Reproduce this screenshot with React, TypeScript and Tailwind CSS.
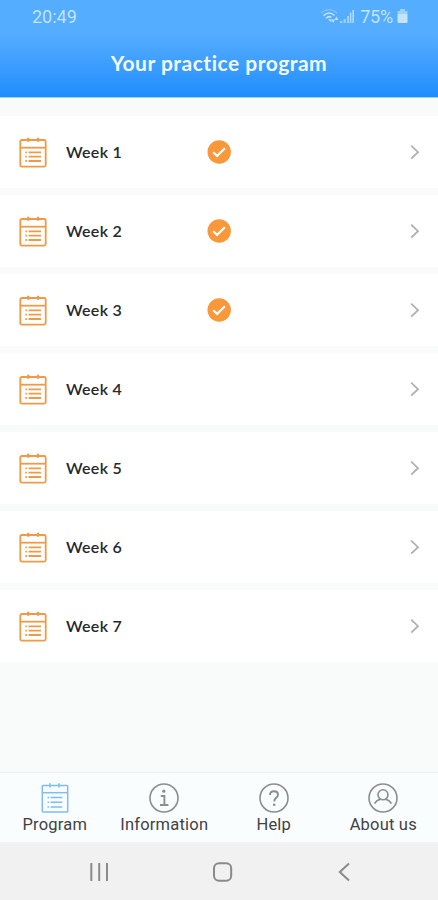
import clsx from "clsx";

const weeks = [
  { name: "Week 1", done: true },
  { name: "Week 2", done: true },
  { name: "Week 3", done: true },
  { name: "Week 4", done: false },
  { name: "Week 5", done: false },
  { name: "Week 6", done: false },
  { name: "Week 7", done: false },
];

function CalendarIcon({ className }: { className?: string }) {
  return (
    <svg
      width="28"
      height="32"
      viewBox="0 0 28 32"
      fill="none"
      stroke="currentColor"
      strokeWidth="1.8"
      className={className}
    >
      <rect x="1.3" y="4" width="25.4" height="26.6" rx="1.5" />
      <path d="M1.3 11.7h25.4" />
      <path d="M9.2 1.8v4M19 1.8v4" strokeWidth="2.2" />
      <path d="M9.5 16.4h12.5M9.5 20.7h12.5M9.5 25h12.5" />
      <path d="M6.3 16.4h1.6M6.3 20.7h1.6M6.3 25h1.6" />
    </svg>
  );
}

// thinner version used in the tab bar
function ProgramIcon() {
  return (
    <svg width="28" height="32" viewBox="0 0 28 32" fill="none" stroke="currentColor" strokeWidth="1.5">
      <rect x="1.3" y="3.5" width="25.4" height="26.5" rx="0.8" />
      <path d="M1.3 10.7h25.4" />
      <path d="M9 1.2v4.4M18 1.2v4.4" />
      <path d="M9.5 15.4h11.8M9.5 20.2h11.8M9.5 25h11.8" />
      <path d="M6.5 15.4h1.5M6.5 20.2h1.5M6.5 25h1.5" />
    </svg>
  );
}

function CheckIcon() {
  return (
    <svg width="24" height="24" viewBox="0 0 24 24" fill="none">
      <circle cx="12.2" cy="12" r="11.7" fill="#f8983a" />
      <path d="M6.2 12.3l3.9 3.6 7.8-7.6" stroke="#fff" strokeWidth="2.2" />
    </svg>
  );
}

function StatusBar() {
  return (
    <div className="flex h-8 items-center pr-[30px] pl-8 font-['Roboto',sans-serif] text-[18px] text-[#c3e3fd]">
      <span>20:49</span>
      <div className="ml-auto flex items-center">
        <svg width="19" height="16" viewBox="0 0 19 16" fill="none" stroke="currentColor">
          <path d="M1 5.2C5.5 0.6 12.5 0.6 17 5.2" strokeWidth="1.1" opacity="0.5" />
          <path d="M3.6 7.6C7 4.4 11 4.4 14.4 7.4" strokeWidth="1.6" />
          <path d="M6.2 10.2c1.6-1.7 3.6-1.9 5.2-.7" strokeWidth="1.5" />
          <path d="M8 11.2l3.4 3.2v-3.2z" fill="currentColor" stroke="none" />
          <path d="M11.5 11.5h3.4l-1.7 3.4zM14.4 12l2-3.6 2 3.6z" fill="currentColor" stroke="none" />
        </svg>
        <svg width="15" height="15" viewBox="0 0 15 15" fill="currentColor" className="ml-px">
          <path d="M0 12h2.4v2H0zM3.6 10h2.2v4H3.6zM7 7h2v7H7z" opacity="0.65" />
          <path d="M9.8 3.5h1.6V14H9.8zM12.4 1H14v13h-1.6z" opacity="0.85" />
        </svg>
        <span className="mr-px ml-[5px] tracking-[-0.2px]">75%</span>
        <svg width="11" height="15" viewBox="0 0 11 15" fill="currentColor" className="ml-[3px]">
          <path d="M3 0h5v2H3zM.5 2h10v2.5H.5z" opacity="0.65" />
          <path d="M.5 4.5h10V13a1 1 0 0 1-1 1h-8a1 1 0 0 1-1-1z" />
        </svg>
      </div>
    </div>
  );
}

function InfoIcon() {
  return (
    <svg width="30" height="32" viewBox="0 0 30 32" fill="none" stroke="currentColor" strokeWidth="1.6">
      <circle cx="15" cy="16" r="14" />
      <circle cx="14.8" cy="9.2" r="1.6" fill="currentColor" stroke="none" />
      <path d="M11.8 14h3.6v8.8M11 23h8.4" strokeWidth="1.9" />
    </svg>
  );
}

function HelpIcon() {
  return (
    <svg width="30" height="32" viewBox="0 0 30 32" fill="none" stroke="currentColor" strokeWidth="1.6">
      <circle cx="15" cy="16" r="14" />
      <path d="M11 13c0-2.6 1.7-3.8 4-3.8s4 1.2 4 3.5c0 3-3.8 3.2-3.8 6.8" strokeWidth="1.9" />
      <circle cx="15.2" cy="22.8" r="1.3" fill="currentColor" stroke="none" />
    </svg>
  );
}

function UserIcon() {
  return (
    <svg width="30" height="32" viewBox="0 0 30 32" fill="none" stroke="currentColor" strokeWidth="1.6">
      <circle cx="15" cy="16" r="14" />
      <circle cx="15" cy="12.8" r="5" />
      <path d="M6.6 21.6c1.1-2.3 3.2-3.7 5.8-4.4M17.6 17.2c2.6.7 4.7 2.1 5.8 4.4" />
    </svg>
  );
}

const tabs = [
  { label: "Program", icon: <ProgramIcon />, active: true },
  { label: "Information", icon: <InfoIcon />, active: false },
  { label: "Help", icon: <HelpIcon />, active: false },
  { label: "About us", icon: <UserIcon />, active: false },
];

export default function App() {
  return (
    <div className="flex h-[900px] w-[438px] flex-col overflow-hidden bg-[#f8fbfa]">
      <header className="h-[98px] border-b border-[#a5d2fb] bg-linear-to-b from-[#54adff] from-35% to-[#1c8dfd]">
        <StatusBar />
        <h1 className="mt-[17px] text-center font-['Lato',sans-serif] text-[21px] leading-[28px] font-bold tracking-[0.5px] text-[#f2faff]">
          Your practice program
        </h1>
      </header>

      <main className="flex flex-1 flex-col gap-[7px] pt-[18px]">
        {weeks.map((week) => (
          <div
            key={week.name}
            className="flex h-[72px] items-center bg-white pr-[17px] pl-[19px]"
          >
            <CalendarIcon className="text-[#f09a48]" />
            <span className="ml-[19px] w-[141px] pb-px font-['Lato',sans-serif] text-[16px] font-semibold tracking-[0.3px] text-[#25282c]">
              {week.name}
            </span>
            {week.done && <CheckIcon />}
            <svg
              width="11"
              height="16"
              viewBox="0 0 11 16"
              fill="none"
              stroke="#b0b0b0"
              strokeWidth="1.8"
              className="ml-auto"
            >
              <path d="M1.2 1.7L8 8.2l-6.8 6.5" />
            </svg>
          </div>
        ))}
      </main>

      <nav className="grid h-[70px] grid-cols-4 border-t border-[#edf0f0] bg-[#fafdfd] pt-[9px]">
        {tabs.map((tab) => (
          <div key={tab.label} className="flex flex-col items-center">
            <span className={clsx(tab.active ? "text-[#7dbdf2]" : "text-[#8b8d8f]")}>
              {tab.icon}
            </span>
            <span className="mt-px font-['Roboto',sans-serif] text-[16.5px] leading-5 tracking-[0.2px] whitespace-nowrap text-[#3f4245]">
              {tab.label}
            </span>
          </div>
        ))}
      </nav>

      {/* system navigation */}
      <div className="flex h-[58px] items-center justify-between bg-[#f1f1f1] pt-[2px] pr-[87px] pl-[89px] text-[#8a8a8a]">
        <svg width="20" height="20" viewBox="0 0 20 20" stroke="currentColor" strokeWidth="2">
          <path d="M2.3 1v18M10.2 1v18M18 1v18" />
        </svg>
        <svg width="20" height="20" viewBox="0 0 20 20" fill="none" stroke="currentColor" strokeWidth="2">
          <rect x="1" y="1.2" width="17.2" height="17.6" rx="5" />
        </svg>
        <svg width="14" height="20" viewBox="0 0 14 20" fill="none" stroke="currentColor" strokeWidth="2">
          <path d="M12 1.5L2.8 10l9.2 8.5" />
        </svg>
      </div>
    </div>
  );
}
